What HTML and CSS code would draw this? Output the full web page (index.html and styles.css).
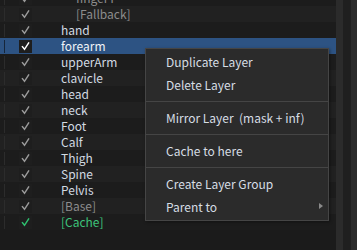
FILE: index.html
```html
<!DOCTYPE html>
<html lang="en">
<head>
    <meta charset="UTF-8">
    <title>Layers</title>
    <link rel="stylesheet" href="styles.css">
</head>
<body>
    <div class="panel">
        <div class="tree">
            <div class="row"><span class="vis"></span><span class="chk"><svg viewBox="0 0 9 9"><path d="M1 4.6 L3.5 7.8 L8 0.8"/></svg></span><span class="name sub">fingerT</span></div>
            <div class="row muted"><span class="vis"></span><span class="chk"><svg viewBox="0 0 9 9"><path d="M1 4.6 L3.5 7.8 L8 0.8"/></svg></span><span class="name sub">[Fallback]</span></div>
            <div class="row"><span class="vis"></span><span class="chk"><svg viewBox="0 0 9 9"><path d="M1 4.6 L3.5 7.8 L8 0.8"/></svg></span><span class="name">hand</span></div>
            <div class="row selected"><span class="vis"></span><span class="chk"><svg viewBox="0 0 9 9"><path d="M1 4.6 L3.5 7.8 L8 0.8"/></svg></span><span class="name">forearm</span></div>
            <div class="row"><span class="vis"></span><span class="chk"><svg viewBox="0 0 9 9"><path d="M1 4.6 L3.5 7.8 L8 0.8"/></svg></span><span class="name">upperArm</span></div>
            <div class="row"><span class="vis"></span><span class="chk"><svg viewBox="0 0 9 9"><path d="M1 4.6 L3.5 7.8 L8 0.8"/></svg></span><span class="name">clavicle</span></div>
            <div class="row"><span class="vis"></span><span class="chk"><svg viewBox="0 0 9 9"><path d="M1 4.6 L3.5 7.8 L8 0.8"/></svg></span><span class="name">head</span></div>
            <div class="row"><span class="vis"></span><span class="chk"><svg viewBox="0 0 9 9"><path d="M1 4.6 L3.5 7.8 L8 0.8"/></svg></span><span class="name">neck</span></div>
            <div class="row"><span class="vis"></span><span class="chk"><svg viewBox="0 0 9 9"><path d="M1 4.6 L3.5 7.8 L8 0.8"/></svg></span><span class="name">Foot</span></div>
            <div class="row"><span class="vis"></span><span class="chk"><svg viewBox="0 0 9 9"><path d="M1 4.6 L3.5 7.8 L8 0.8"/></svg></span><span class="name">Calf</span></div>
            <div class="row"><span class="vis"></span><span class="chk"><svg viewBox="0 0 9 9"><path d="M1 4.6 L3.5 7.8 L8 0.8"/></svg></span><span class="name">Thigh</span></div>
            <div class="row"><span class="vis"></span><span class="chk"><svg viewBox="0 0 9 9"><path d="M1 4.6 L3.5 7.8 L8 0.8"/></svg></span><span class="name">Spine</span></div>
            <div class="row"><span class="vis"></span><span class="chk"><svg viewBox="0 0 9 9"><path d="M1 4.6 L3.5 7.8 L8 0.8"/></svg></span><span class="name">Pelvis</span></div>
            <div class="row muted"><span class="vis"></span><span class="chk"><svg viewBox="0 0 9 9"><path d="M1 4.6 L3.5 7.8 L8 0.8"/></svg></span><span class="name">[Base]</span></div>
            <div class="row cache"><span class="vis"></span><span class="chk"><svg viewBox="0 0 9 9"><path d="M1 4.6 L3.5 7.8 L8 0.8"/></svg></span><span class="name">[Cache]</span></div>
        </div>
        <div class="strip light"></div>
        <div class="strip dark"></div>
        <div class="strip light"></div>
    </div>

    <div class="menu">
        <div class="item">Duplicate Layer</div>
        <div class="item">Delete Layer</div>
        <div class="sep"></div>
        <div class="item">Mirror Layer&nbsp; (mask + inf)</div>
        <div class="sep"></div>
        <div class="item">Cache to here</div>
        <div class="sep"></div>
        <div class="item">Create Layer Group</div>
        <div class="item has-sub">Parent to</div>
    </div>
</body>
</html>
```

FILE: styles.css
```css
body {
    margin: 0;
    width: 357px;
    height: 250px;
    overflow: hidden;
    background: #1b1b1b;
    font-family: "Noto Sans CJK KR", "Noto Sans", sans-serif;
    color: #d2dae2;
}
.panel {
    display: flex;
    height: 250px;
}
.tree {
    flex: 1;
    margin-top: -10px;
}
.strip {
    width: 7px;
}
.strip.light { background: #2b2b2b; }
.strip.dark { background: #1f1f1f; width: 8px; }
.strip:last-child { width: 6px; }

.row {
    display: flex;
    align-items: center;
    height: 16px;
    font-size: 12px;
    line-height: 14px;
    background: #1c1c1c;
}
.row:nth-child(even) {
    background: #212121;
}
.row.selected {
    background: #2d5383;
    color: #f0f4f8;
}
.vis {
    width: 4px;
    height: 13px;
    border-right: 1px solid #2c2c2c;
}
.selected .vis {
    border-right-color: #16263b;
}
.chk {
    display: flex;
    align-items: center;
    justify-content: center;
    width: 13px;
    height: 13px;
    margin-left: 14px;
    background: #1e1e1e;
}
.chk svg {
    width: 9px;
    height: 10px;
    fill: none;
    stroke: #9a9a9a;
    stroke-width: 1.5;
}
.selected .chk svg { stroke: #ffffff; }
.cache .chk svg { stroke: #2fbf6f; }
.name {
    margin-left: 29px;
    height: 14px;
}
.name.sub {
    margin-left: 44px;
}
.muted .name { color: #8c8c8c; }
.row:first-child .name { color: #8c8c8c; }
.cache .name { color: #3cc27a; }

/* context menu */
.menu {
    position: absolute;
    left: 145px;
    top: 48px;
    width: 182px;
    padding: 1px 0 2px 0;
    background: #2b2b2b;
    border: 1px solid #454545;
    box-shadow: 1px 1px 3px rgba(0,0,0,0.4);
    font-size: 12px;
    color: #d6dde4;
}
.item {
    height: 23px;
    line-height: 23px;
    padding-left: 20px;
    position: relative;
}
.sep {
    height: 1px;
    margin: 5px 0 4px 0;
    background: #454545;
}
.has-sub::after {
    content: "";
    position: absolute;
    right: 5px;
    top: 8px;
    border-left: 4px solid #8a8a8a;
    border-top: 3.5px solid transparent;
    border-bottom: 3.5px solid transparent;
}
```
